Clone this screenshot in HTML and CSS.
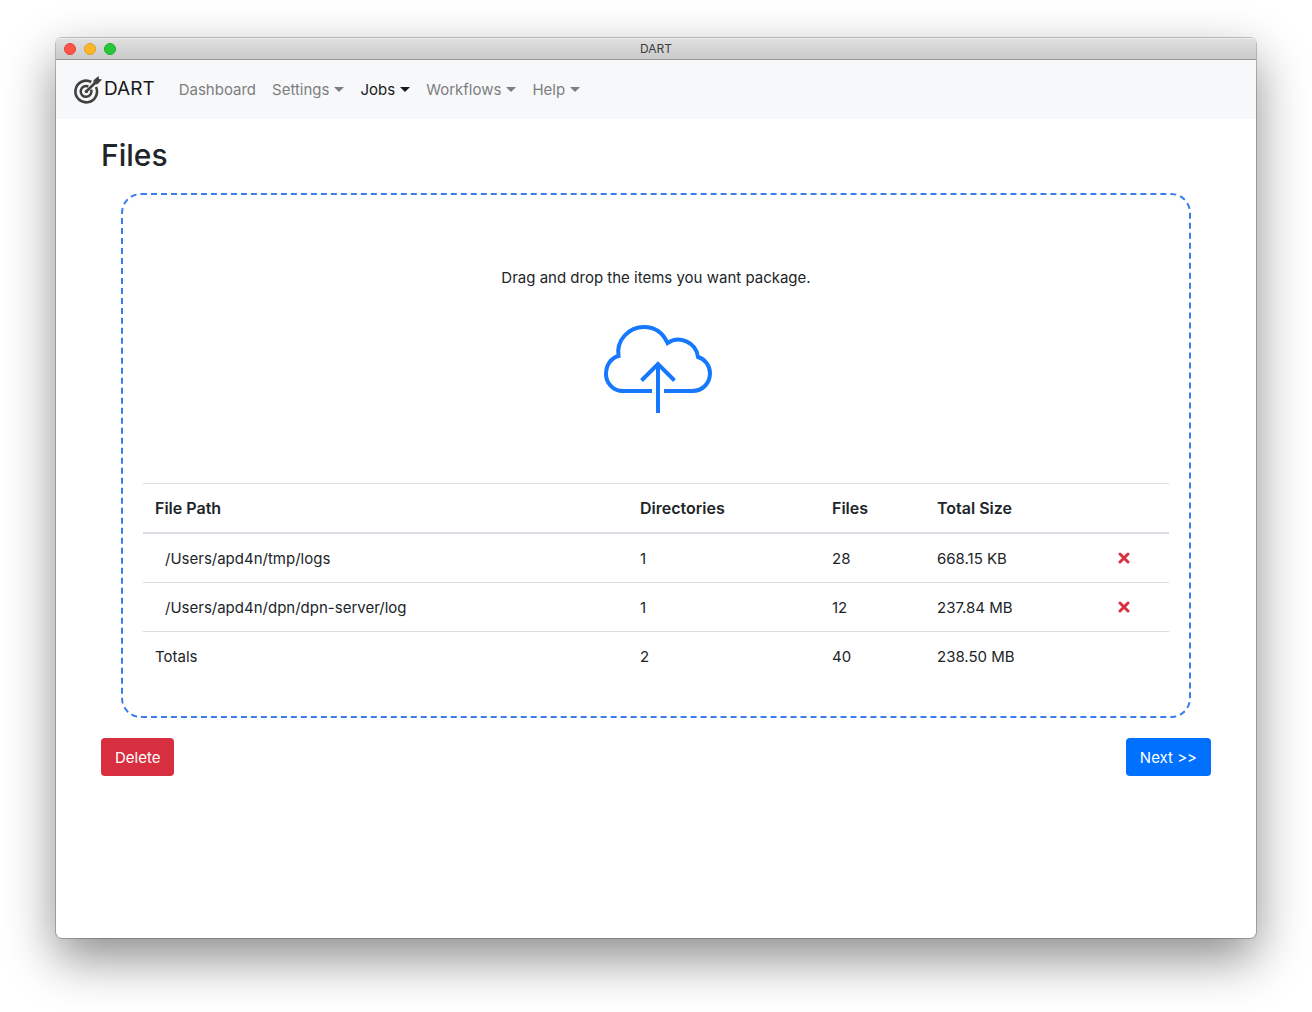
FILE: index.html
```html
<!DOCTYPE html>
<html lang="en">
<head>
<meta charset="utf-8">
<meta name="viewport" content="width=device-width, initial-scale=1">
<title>DART</title>
<link rel="stylesheet" href="styles.css">
</head>
<body>
<div class="window">
  <header class="titlebar">
    <div class="lights"><span class="light close"></span><span class="light minimize"></span><span class="light maximize"></span></div>
    <span class="title">DART</span>
  </header>
  <nav class="navbar">
    <a class="brand" href="#">
      <svg class="logo" viewBox="0 0 30 30" aria-hidden="true">
        <g fill="none" stroke="#404040">
          <path d="M19.300 7A10.800 10.800 0 1 0 24 12" stroke-width="2.600"/>
          <path d="M16.300 11.500A5.400 5.400 0 1 0 19.200 14.700" stroke-width="2.500"/>
          <path d="M14.300 16.500L24 7" stroke-width="2.600"/>
        </g>
        <circle cx="14.300" cy="16.500" r="1.700" fill="#404040"/>
        <path d="M21.500 8.800V5.300L26.500 1L27 4L30 4.600L25.500 9.200H22Z" fill="#404040"/>
      </svg>
      <span>DART</span>
    </a>
    <a class="nav-link" href="#">Dashboard</a>
    <a class="nav-link dropdown" href="#">Settings</a>
    <a class="nav-link dropdown active" href="#">Jobs</a>
    <a class="nav-link dropdown" href="#">Workflows</a>
    <a class="nav-link dropdown" href="#">Help</a>
  </nav>
  <main class="content">
    <h2 class="heading">Files</h2>
    <section class="drop-zone">
      <div class="drop-prompt">
        <p class="drop-text">Drag and drop the items you want package.</p>
        <svg class="cloud" viewBox="0 0 112 92" fill="none" stroke="#1677ff" stroke-width="4" aria-hidden="true">
          <path d="M52 68H23C13 68 6 60 6 51C6 42 11 35 18.500 33C16 17 29 4 44 4C55 4 63 10 67.500 20C79 12 96 19 98 34C105 36 110 43 110 50C110 60 103 68 92 68H64"/>
          <path d="M58 90V41M41.500 57.500L58 41L74.500 57.500"/>
        </svg>
      </div>
      <table class="files">
        <colgroup><col><col class="col-dirs"><col class="col-files"><col class="col-size"><col class="col-action"></colgroup>
        <thead>
          <tr><th>File Path</th><th>Directories</th><th>Files</th><th>Total Size</th><th></th></tr>
        </thead>
        <tbody>
          <tr><td class="path">/Users/apd4n/tmp/logs</td><td>1</td><td>28</td><td>668.15 KB</td>
            <td class="action"><button class="remove" type="button" aria-label="Remove /Users/apd4n/tmp/logs"><svg viewBox="0 0 12 12" aria-hidden="true"><path d="M2 2L10 10M10 2L2 10"/></svg></button></td></tr>
          <tr><td class="path">/Users/apd4n/dpn/dpn-server/log</td><td>1</td><td>12</td><td>237.84 MB</td>
            <td class="action"><button class="remove" type="button" aria-label="Remove /Users/apd4n/dpn/dpn-server/log"><svg viewBox="0 0 12 12" aria-hidden="true"><path d="M2 2L10 10M10 2L2 10"/></svg></button></td></tr>
        </tbody>
        <tfoot>
          <tr><td>Totals</td><td>2</td><td>40</td><td>238.50 MB</td><td></td></tr>
        </tfoot>
      </table>
    </section>
    <div class="actions">
      <button class="btn danger" type="button">Delete</button>
      <button class="btn primary" type="button">Next &gt;&gt;</button>
    </div>
  </main>
</div>
</body>
</html>
```
FILE: styles.css
```css
*, *::before, *::after { box-sizing: border-box; }

body {
  margin: 0;
  padding: 38px 56px 74px;
  background: #fff;
  color: #212529;
  font: 15px/24px Inter, "Liberation Sans", sans-serif;
}

.window {
  display: flex;
  flex-direction: column;
  min-height: calc(100vh - 112px);
  border-radius: 6px;
  background: #fff;
  box-shadow: 0 0 0 1px rgba(0, 0, 0, .22), 0 20px 50px rgba(0, 0, 0, .46);
}

.titlebar {
  display: grid;
  grid-template-columns: 1fr auto 1fr;
  align-items: center;
  height: 22px;
  padding: 0 8px;
  border-top: 1px solid #f0f0f0;
  border-bottom: 1px solid #989898;
  border-radius: 5px 5px 0 0;
  background: linear-gradient(#dfdfdf, #cacaca);
}
.lights { display: flex; gap: 8px; }
.light { width: 12px; height: 12px; border: 1px solid; border-radius: 50%; }
.close { background: #ff5249; border-color: #e33e37; }
.minimize { background: #ffb528; border-color: #df9d1e; }
.maximize { background: #26c839; border-color: #1bab2c; }
.title { color: #3c3c3c; font-size: 12px; line-height: 20px; }

.navbar {
  display: flex;
  align-items: center;
  height: 59px;
  padding: 0 16px;
  background: #f7f8fa;
}
.brand {
  display: flex;
  align-items: center;
  margin-right: 16px;
  color: #17191b;
  font-size: 19px;
  line-height: 30px;
  text-decoration: none;
}
.brand span { padding-bottom: 2px; }
.logo { width: 30px; height: 30px; margin-right: 2px; }
.nav-link {
  padding: 8px;
  color: #7d7e7f;
  text-decoration: none;
}
.nav-link.active { color: #17191b; }
.dropdown::after {
  content: "";
  display: inline-block;
  margin-left: 5px;
  border: 5px solid transparent;
  border-top-color: currentColor;
  border-bottom: 0;
  vertical-align: 3px;
}

.content { padding: 16px 45px; }
.heading {
  margin: 0 0 18px;
  font-size: 30px;
  font-weight: 500;
  line-height: 40px;
}

.drop-zone {
  margin: 0 20px 20px;
  padding: 20px 20px 36px;
  border: 2px dashed #3b7ded;
  border-radius: 20px;
}
.drop-prompt {
  display: flex;
  flex-direction: column;
  align-items: center;
  padding: 51px 0 68px;
}
.drop-text { margin: 0 0 33px; }
.cloud { width: 112px; height: 92px; }

.files {
  width: 100%;
  table-layout: fixed;
  border-spacing: 0;
}
.col-dirs { width: 192px; }
.col-files { width: 105px; }
.col-size { width: 181px; }
.col-action { width: 63px; }
.files th, .files td { padding: 13px 12px 11px; text-align: left; }
.files th {
  padding: 12px;
  border-top: 1px solid #dadde1;
  border-bottom: 2px solid #dadde1;
  font-size: 16px;
  font-weight: 600;
}
.files tbody td { border-bottom: 1px solid #dadde1; }
.files .path { padding-left: 22px; }
.files .action { padding: 12px; }

.remove {
  display: block;
  padding: 0;
  border: 0;
  background: none;
}
.remove svg {
  display: block;
  width: 12px;
  height: 12px;
  fill: none;
  stroke: #d93040;
  stroke-width: 3;
  stroke-linecap: round;
}

.actions { display: flex; justify-content: space-between; }
.btn {
  height: 38px;
  padding: 1px 14px 0;
  border: 0;
  border-radius: 4px;
  color: #fff;
  font: inherit;
}
.danger { background: #d72f3f; }
.primary { background: #0070ff; }
```
